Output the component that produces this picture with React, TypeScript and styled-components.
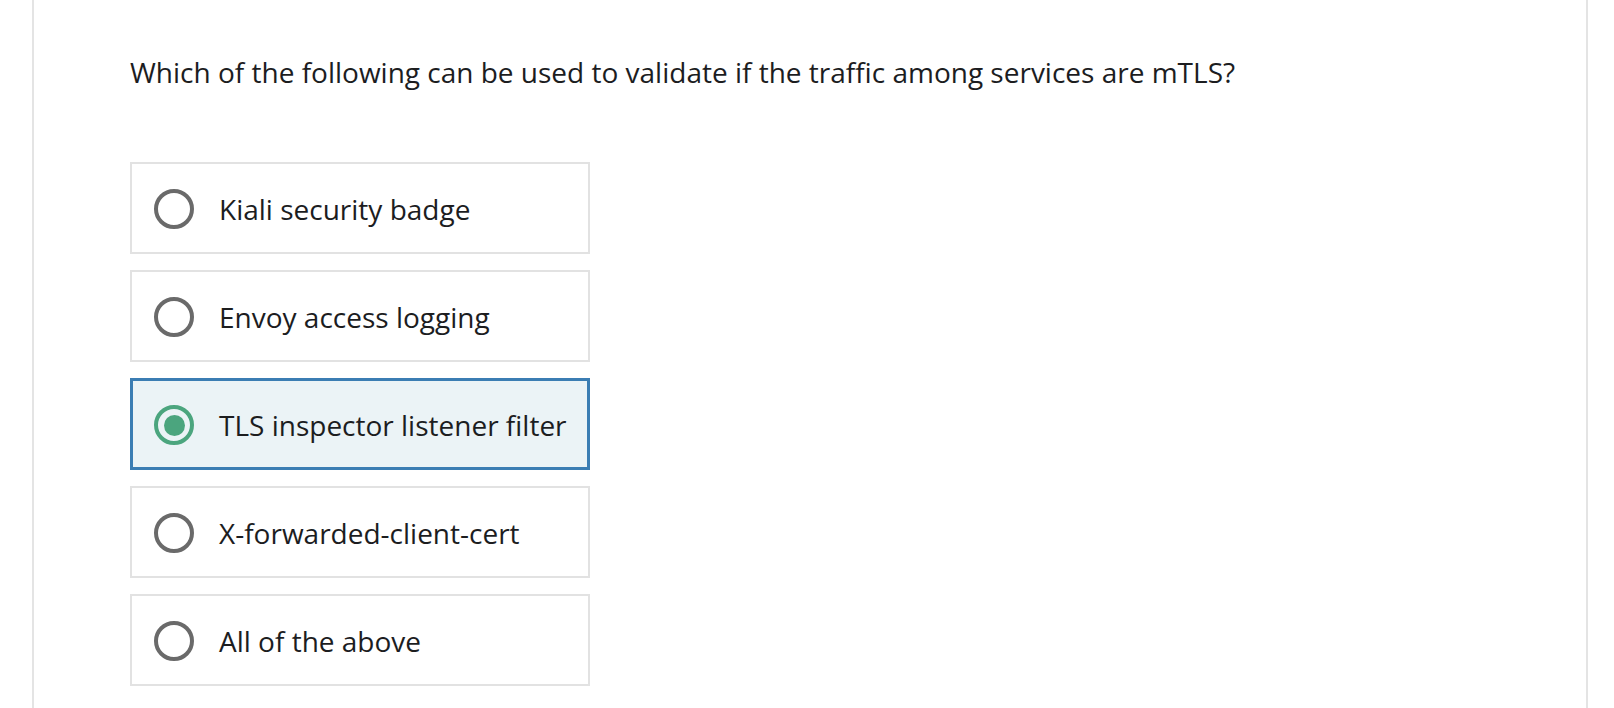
import styled, { createGlobalStyle } from "styled-components";

const GlobalStyle = createGlobalStyle`
  html, body {
    margin: 0;
    padding: 0;
    background: #ffffff;
  }
  body {
    font-family: "Open Sans", "Noto Sans", sans-serif;
    color: #1c1d1f;
  }
`;

type Option = {
  id: string;
  label: string;
};

const OPTIONS: Option[] = [
  { id: "a", label: "Kiali security badge" },
  { id: "b", label: "Envoy access logging" },
  { id: "c", label: "TLS inspector listener filter" },
  { id: "d", label: "X-forwarded-client-cert" },
  { id: "e", label: "All of the above" },
];

const Page = styled.div`
  height: 708px;
  overflow: hidden;
  padding-left: 32px;
`;

const Panel = styled.div`
  width: 1456px;
  min-height: 708px;
  border-left: 2px solid #e4e4e4;
  border-right: 2px solid #e4e4e4;
  padding: 53px 0 0 96px;
  box-sizing: content-box;
`;

const Question = styled.p`
  margin: 0 0 71px;
  font-size: 28px;
  line-height: 38px;
  color: #1c1d1f;
`;

const OptionList = styled.div`
  display: flex;
  flex-direction: column;
  gap: 16px;
`;

const OptionRow = styled.label<{ $selected: boolean }>`
  display: flex;
  align-items: center;
  gap: 25px;
  width: 460px;
  height: 92px;
  box-sizing: border-box;
  padding: 2px 0 0 ${({ $selected }) => ($selected ? "21px" : "22px")};
  border: ${({ $selected }) =>
    $selected ? "3px solid #3b7db3" : "2px solid #e2e2e2"};
  background: ${({ $selected }) => ($selected ? "#ebf3f6" : "#ffffff")};
  cursor: pointer;
`;

const Radio = styled.span<{ $selected: boolean }>`
  flex: none;
  width: 40px;
  height: 40px;
  box-sizing: border-box;
  border-radius: 50%;
  border: 4px solid ${({ $selected }) => ($selected ? "#4ba57e" : "#6a6a6a")};
  display: flex;
  align-items: center;
  justify-content: center;

  &::after {
    content: "";
    display: ${({ $selected }) => ($selected ? "block" : "none")};
    width: 21px;
    height: 21px;
    border-radius: 50%;
    background: #4ba57e;
  }
`;

const OptionText = styled.span`
  margin-top: 0;
  font-size: 28px;
  line-height: 38px;
  color: #1c1d1f;
`;

const App = () => {
  const selected = "c";
  return (
    <Page>
      <GlobalStyle />
      <Panel>
        <Question>
          Which of the following can be used to validate if the traffic among
          services are mTLS?
        </Question>
        <OptionList>
          {OPTIONS.map((o) => (
            <OptionRow key={o.id} $selected={o.id === selected}>
              <Radio $selected={o.id === selected} />
              <OptionText>{o.label}</OptionText>
            </OptionRow>
          ))}
        </OptionList>
      </Panel>
    </Page>
  );
};

export default App;
